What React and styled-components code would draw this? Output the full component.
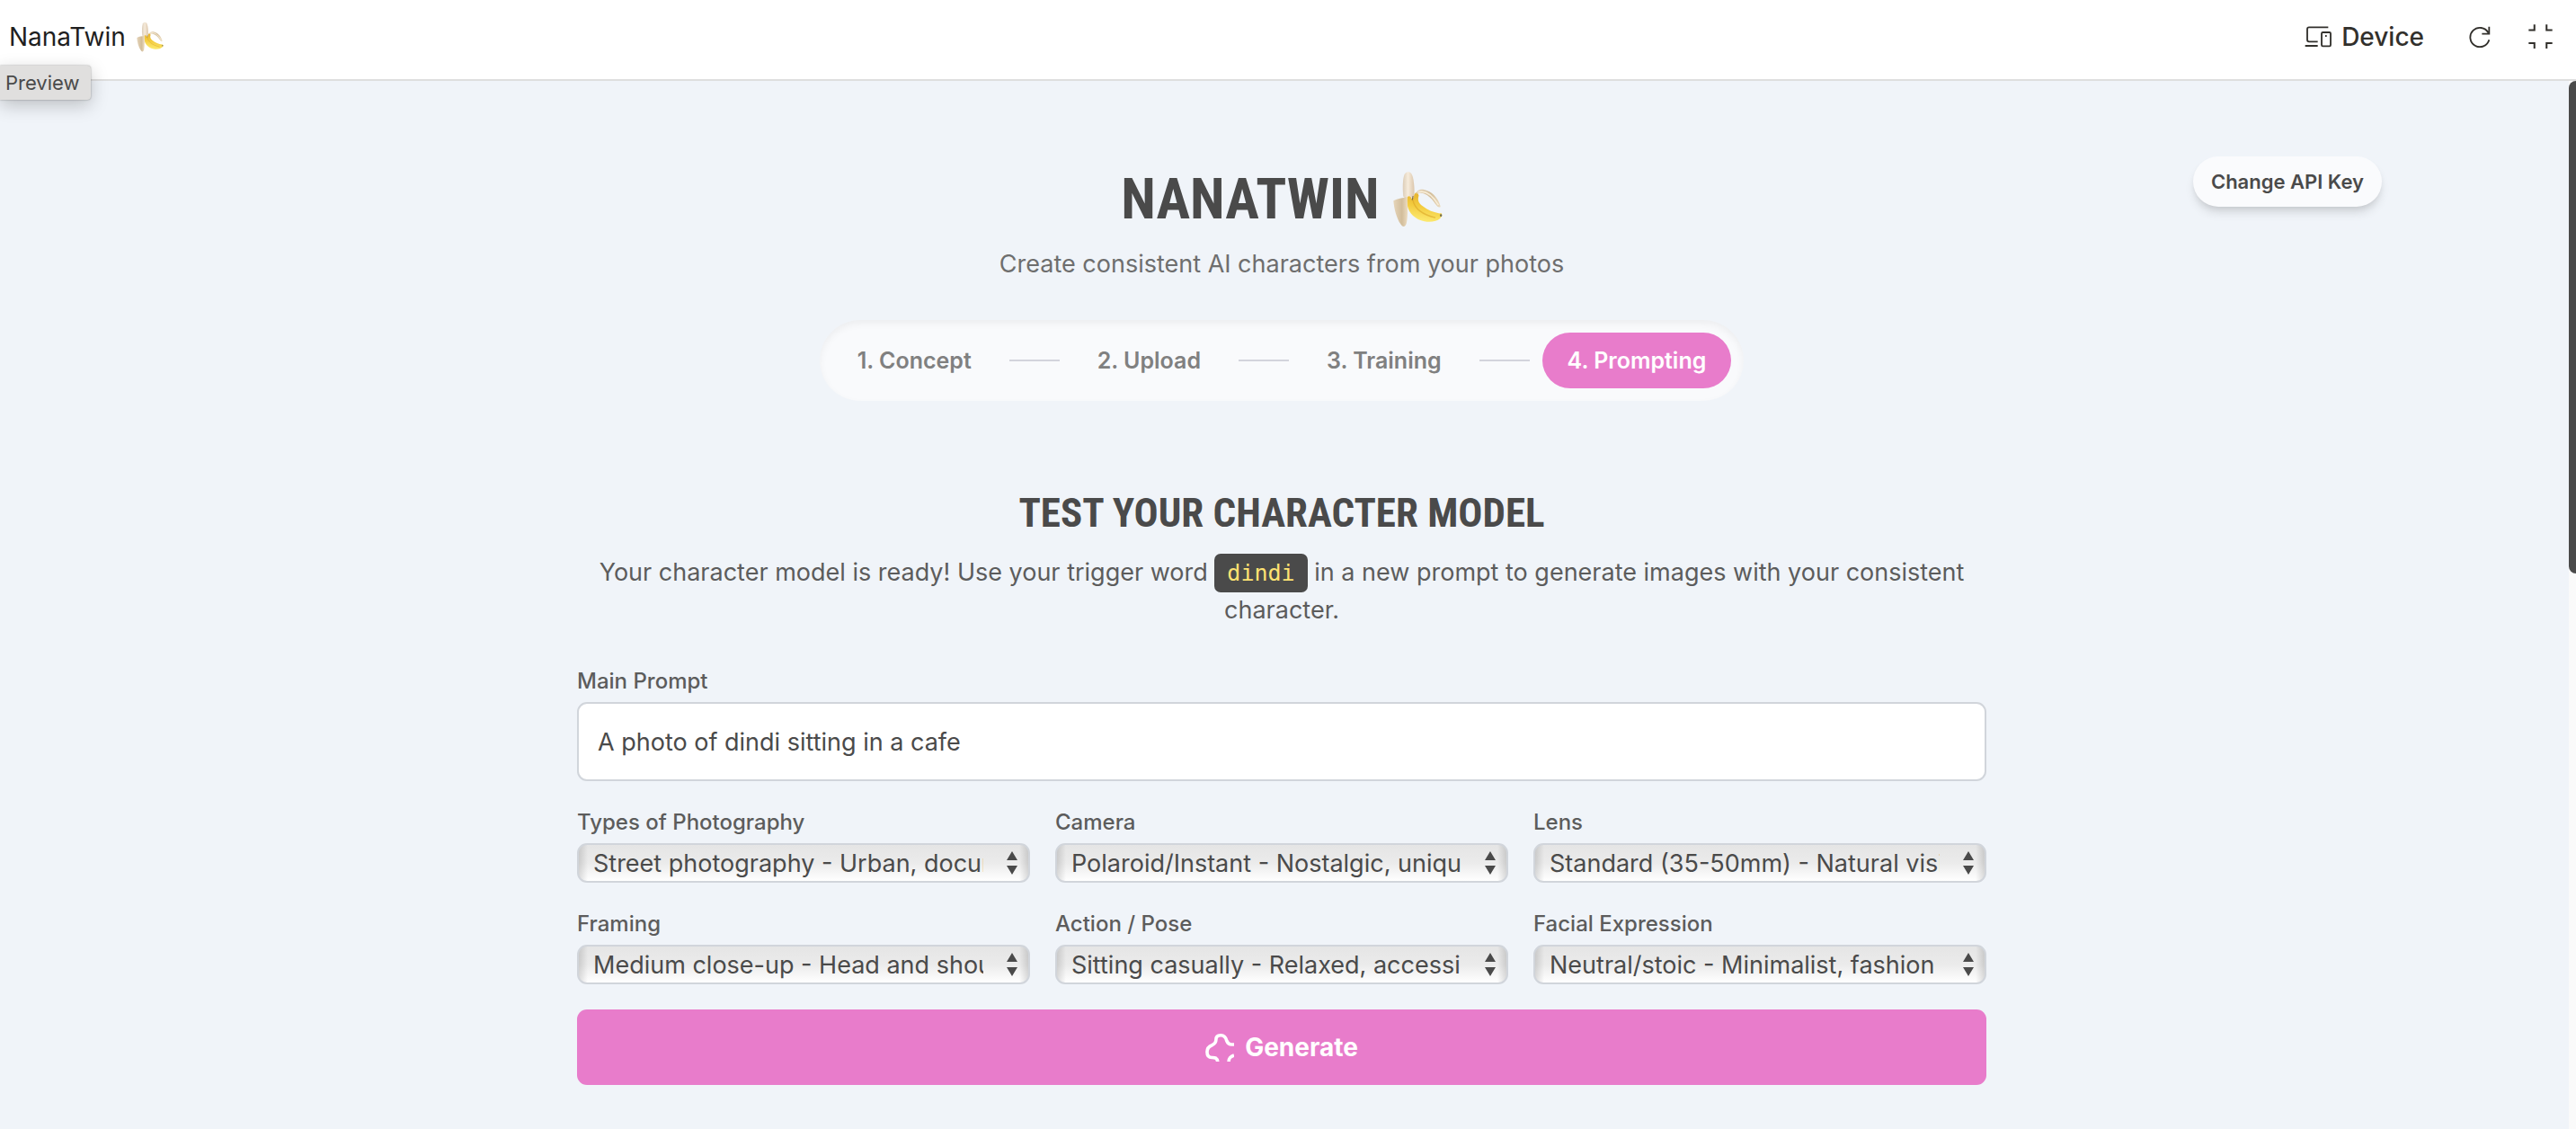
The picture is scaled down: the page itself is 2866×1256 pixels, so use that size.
import React from "react";
import styled, { createGlobalStyle } from "styled-components";

const sans = `Inter, "Liberation Sans", sans-serif`;
const display = `"Roboto Condensed", Roboto, sans-serif`;
const mono = `"DejaVu Sans Mono", "Liberation Mono", monospace`;

const GlobalStyle = createGlobalStyle`
  *, *::before, *::after { box-sizing: border-box; }
  body {
    margin: 0;
    background: #f0f4f9;
    color: #4a4a4a;
    font-family: ${sans};
    font-size: 27px;
    line-height: 42px;
  }
  h1, h2, p, ol { margin: 0; padding: 0; }
  button, input, select { font: inherit; color: inherit; }
`;

const Shell = styled.div`
  display: flex;
  flex-direction: column;
  height: 100vh;
  overflow: hidden;
`;

const TopBar = styled.header`
  position: relative;
  display: flex;
  flex: none;
  align-items: center;
  justify-content: space-between;
  height: 90px;
  padding: 0 26px 7px 10px;
  background: #fff;
  border-bottom: 2px solid #dedede;
`;

const AppName = styled.div`
  display: flex;
  align-items: center;
  gap: 12px;
  color: #1f1f1f;
  font-size: 28px;
`;

const Tooltip = styled.div`
  position: absolute;
  top: 73px;
  left: 0;
  padding: 0 12px 0 6px;
  border-radius: 0 4px 4px 0;
  background: #e0dfde;
  box-shadow: 0 0 2px rgba(0, 0, 0, 0.4), 0 6px 20px rgba(0, 0, 0, 0.22);
  font-size: 22px;
  line-height: 38px;
`;

const Tools = styled.div`
  display: flex;
  align-items: center;
  gap: 42px;
`;

const ToolButton = styled.button`
  display: flex;
  align-items: center;
  gap: 11px;
  padding: 0;
  border: 0;
  background: none;
  color: #32302c;
  font-size: 28px;
  font-weight: 500;
  &:first-child { margin-right: 8px; }
  svg { display: block; }
`;

const Viewport = styled.div`
  display: flex;
  flex: 1;
  min-height: 0;
`;

const Page = styled.main`
  flex: 1;
  min-width: 0;
  overflow: hidden;
  padding: 84px 6px 0 0;
`;

const ScrollTrack = styled.div`
  width: 8px;
  background: #fafafa;
`;

const ScrollThumb = styled.div`
  height: 47%;
  border-radius: 8px 0 0 8px;
  background: #4a4a4a;
`;

const Hero = styled.div`
  display: grid;
  grid-template-columns: 1fr auto 1fr;
  align-items: start;
  max-width: 2448px;
  margin: 0 auto;
`;

const HeroCenter = styled.div`
  grid-column: 2;
  padding-top: 16px;
  text-align: center;
`;

const Title = styled.h1`
  display: flex;
  align-items: center;
  justify-content: center;
  gap: 15px;
  font: 700 63px/63px ${display};
`;

const Subtitle = styled.p`
  margin-top: 20px;
  color: #6e6e6e;
`;

const KeyButton = styled.button`
  justify-self: end;
  height: 56px;
  padding: 0 20px;
  border: 0;
  border-radius: 28px;
  background: #fafbfd;
  box-shadow: 0 8px 12px -2px rgba(0, 0, 0, 0.12), 0 4px 8px -4px rgba(0, 0, 0, 0.12);
  font-size: 22px;
  font-weight: 600;
`;

const Steps = styled.ol`
  display: flex;
  align-items: center;
  gap: 14px;
  width: max-content;
  margin: 41px auto 0;
  padding: 14px;
  border-radius: 45px;
  background: #f9fafc;
  box-shadow: inset 0 4px 8px rgba(0, 0, 0, 0.05);
  list-style: none;
`;

const Step = styled.li`
  padding: 0 28px;
  border-radius: 31px;
  background: ${(p) => (p.$active ? "#e87ccb" : "transparent")};
  color: ${(p) => (p.$active ? "#fff" : "#808080")};
  font-size: 25px;
  font-weight: 600;
  line-height: 62px;
`;

const StepLine = styled.li`
  width: 56px;
  height: 2px;
  background: #d3d4dc;
`;

const Form = styled.form`
  display: flex;
  flex-direction: column;
  gap: 28px;
  max-width: 1568px;
  margin: 97px auto 0;
`;

const Intro = styled.div`
  margin-bottom: 12px;
  color: #5c5c5c;
  text-align: center;
`;

const SectionTitle = styled.h2`
  margin-bottom: 17px;
  color: #4a4a4a;
  font: 700 45px/56px ${display};
`;

const Trigger = styled.code`
  padding: 7px 14px;
  border-radius: 7px;
  background: #4a4a4a;
  color: #fde272;
  font-family: ${mono};
  font-size: 25px;
  line-height: 25px;
`;

const Field = styled.div`
  display: flex;
  flex-direction: column;
  gap: 5px;
  min-width: 0;
`;

const Label = styled.label`
  color: #5c5c5c;
  font-size: 24px;
  font-weight: 500;
  line-height: 36px;
`;

const TextInput = styled.input`
  width: 100%;
  height: 88px;
  padding: 0 21px;
  border: 2px solid #d1d5db;
  border-radius: 11px;
  background: #fff;
`;

const FieldGrid = styled.div`
  display: grid;
  grid-template-columns: repeat(3, minmax(0, 1fr));
  gap: 28px;
`;

const SelectBox = styled.div`
  display: grid;
  align-items: center;
  > * { grid-area: 1 / 1; }
  > svg {
    justify-self: end;
    margin-right: 14px;
    pointer-events: none;
  }
`;

const Select = styled.select`
  appearance: none;
  width: 100%;
  height: 44px;
  padding: 0 50px 0 16px;
  border: 2px solid #d1d5db;
  border-radius: 11px;
  background:
    linear-gradient(90deg, rgba(0, 0, 0, 0.13), transparent 10px, transparent calc(100% - 10px), rgba(0, 0, 0, 0.13)),
    linear-gradient(#e5e5e5, #ebebeb 50%, #fff);
`;

const GenerateButton = styled.button`
  display: flex;
  align-items: center;
  justify-content: center;
  gap: 12px;
  height: 84px;
  border: 0;
  border-radius: 11px;
  background: #e87ccb;
  color: #fff;
  font-size: 28px;
  font-weight: 700;
`;

function Banana({ width, height, id }) {
  return (
    <svg width={width} height={height} viewBox="42 26 166 190" role="img" aria-label="banana">
      <defs>
        <linearGradient id={id + "peel"} x1="0" x2="1">
          <stop offset="0" stopColor="#dccdb8" />
          <stop offset=".45" stopColor="#f6ebdb" />
          <stop offset="1" stopColor="#dbc6ab" />
        </linearGradient>
        <linearGradient id={id + "front"} x1="0" x2="1">
          <stop offset="0" stopColor="#e6d5ba" />
          <stop offset=".6" stopColor="#d2bd9b" />
          <stop offset="1" stopColor="#ecdcc0" />
        </linearGradient>
        <linearGradient id={id + "skin"} x1=".6" y1="0" x2=".4" y2="1">
          <stop offset="0" stopColor="#e3ae2b" />
          <stop offset=".5" stopColor="#f3cb3e" />
          <stop offset="1" stopColor="#fdec74" />
        </linearGradient>
      </defs>
      <path d="M76 112C73 82 74 53 80 38c4-9 16-12 23-3 9 13 11 50 10 74-7 10-28 13-37 3Z" fill={`url(#${id}peel)`} />
      <path d="M90 114c4-4 10-4 15 7l6-5c1-10 4-16 12-19l5 12c-5 17 0 25 12 35 18 14 39 23 58 25l5-1c5 5 3 12-4 19-10 9-31 13-52 9-30-6-53-28-57-53-2-10-2-22 0-29Z" fill={`url(#${id}skin)`} />
      <path d="M108 124c5 24 27 48 76 59" fill="none" stroke="#dba526" strokeWidth="4" opacity=".6" />
      <path d="M120 104c-1-12 12-17 25-15 27 5 48 27 56 56-1 5-6 4-10 1-12-13-15-23-27-32-14-11-28-17-44-10Z" fill={`url(#${id}front)`} />
      <path d="M126 98c22-8 45 6 68 43" fill="none" stroke="#f7ecd6" strokeWidth="5" />
      <path d="M43 126c14-7 30-7 45-13 3 30 4 64-1 88-4 16-14 14-20 4C53 184 45 152 43 126Z" fill={`url(#${id}front)`} />
      <path d="M106 124l3-13" stroke="#8b7040" strokeWidth="4" />
      <path d="M200 172c3-2 6 0 6 3 0 4-2 5-4 5-3-1-4-5-2-8Z" fill="#77704a" />
    </svg>
  );
}

const DeviceIcon = () => (
  <svg width="30" height="24" viewBox="40 39 90 72" fill="none" stroke="currentColor" strokeWidth="5.5">
    <path d="M119 43H55q-6 0-6 6v36q0 6 6 6h29M42 105h42" />
    <rect x="97" y="60" width="30" height="46" rx="4" />
    <path d="M109 72h5" />
  </svg>
);

const RefreshIcon = () => (
  <svg width="24" height="24" viewBox="588 39 72 72" fill="none" stroke="currentColor" strokeWidth="5.5">
    <path d="M655 85A32 32 0 1 1 652 61M655 41v24h-24" />
  </svg>
);

const CollapseIcon = () => (
  <svg width="27" height="27" viewBox="788 35 80 80" fill="none" stroke="currentColor" strokeWidth="6">
    <path d="M789 54h19V36M848 36v18h19M789 97h19v18M867 97h-19v18" />
  </svg>
);

const Arrows = () => (
  <svg width="12" height="26" viewBox="0 0 12 26" fill="#4a4a4a">
    <path d="M6 0l6 10H0zM6 26l6-10H0z" />
  </svg>
);

const GenerateIcon = () => (
  <svg width="32" height="31" viewBox="35 47 97 93" fill="none" stroke="currentColor" strokeWidth="11">
    <path d="M132 83h-8c-10 0-14-5-17-13-3-12-8-18-20-18s-16 6-16 15c0 10-5 14-13 18-11 4-17 11-17 23s5 19 16 19c10 0 17-1 20 15M114 142c0-14 6-18 18-23" />
  </svg>
);

const steps = ["1. Concept", "2. Upload", "3. Training", "4. Prompting"];
const activeStep = 3;

const fields = [
  ["type", "Types of Photography", "Street photography - Urban, documentary style"],
  ["camera", "Camera", "Polaroid/Instant - Nostalgic, unique colors"],
  ["lens", "Lens", "Standard (35-50mm) - Natural vision"],
  ["framing", "Framing", "Medium close-up - Head and shoulders"],
  ["pose", "Action / Pose", "Sitting casually - Relaxed, accessible"],
  ["expression", "Facial Expression", "Neutral/stoic - Minimalist, fashion"],
];

export default function App() {
  return (
    <Shell>
      <GlobalStyle />
      <TopBar>
        <AppName>
          NanaTwin <Banana id="bar" width={30} height={34} />
        </AppName>
        <Tools>
          <ToolButton type="button"><DeviceIcon />Device</ToolButton>
          <ToolButton type="button" aria-label="Refresh"><RefreshIcon /></ToolButton>
          <ToolButton type="button" aria-label="Exit full screen"><CollapseIcon /></ToolButton>
        </Tools>
        <Tooltip role="tooltip">Preview</Tooltip>
      </TopBar>
      <Viewport>
        <Page>
          <Hero>
            <HeroCenter>
              <Title>
                NANATWIN <Banana id="hero" width={55} height={63} />
              </Title>
              <Subtitle>Create consistent AI characters from your photos</Subtitle>
            </HeroCenter>
            <KeyButton type="button">Change API Key</KeyButton>
          </Hero>
          <Steps>
            {steps.map((name, i) => (
              <React.Fragment key={name}>
                {i > 0 && <StepLine aria-hidden="true" />}
                <Step $active={i === activeStep}>{name}</Step>
              </React.Fragment>
            ))}
          </Steps>
          <Form onSubmit={(e) => e.preventDefault()}>
            <Intro>
              <SectionTitle>TEST YOUR CHARACTER MODEL</SectionTitle>
              <p>
                Your character model is ready! Use your trigger word <Trigger>dindi</Trigger> in a new prompt to
                generate images with your consistent character.
              </p>
            </Intro>
            <Field>
              <Label htmlFor="prompt">Main Prompt</Label>
              <TextInput id="prompt" type="text" defaultValue="A photo of dindi sitting in a cafe" />
            </Field>
            <FieldGrid>
              {fields.map(([id, label, value]) => (
                <Field key={id}>
                  <Label htmlFor={id}>{label}</Label>
                  <SelectBox>
                    <Select id={id}>
                      <option>{value}</option>
                    </Select>
                    <Arrows />
                  </SelectBox>
                </Field>
              ))}
            </FieldGrid>
            <GenerateButton type="submit">
              <GenerateIcon />
              Generate
            </GenerateButton>
          </Form>
        </Page>
        <ScrollTrack>
          <ScrollThumb />
        </ScrollTrack>
      </Viewport>
    </Shell>
  );
}
